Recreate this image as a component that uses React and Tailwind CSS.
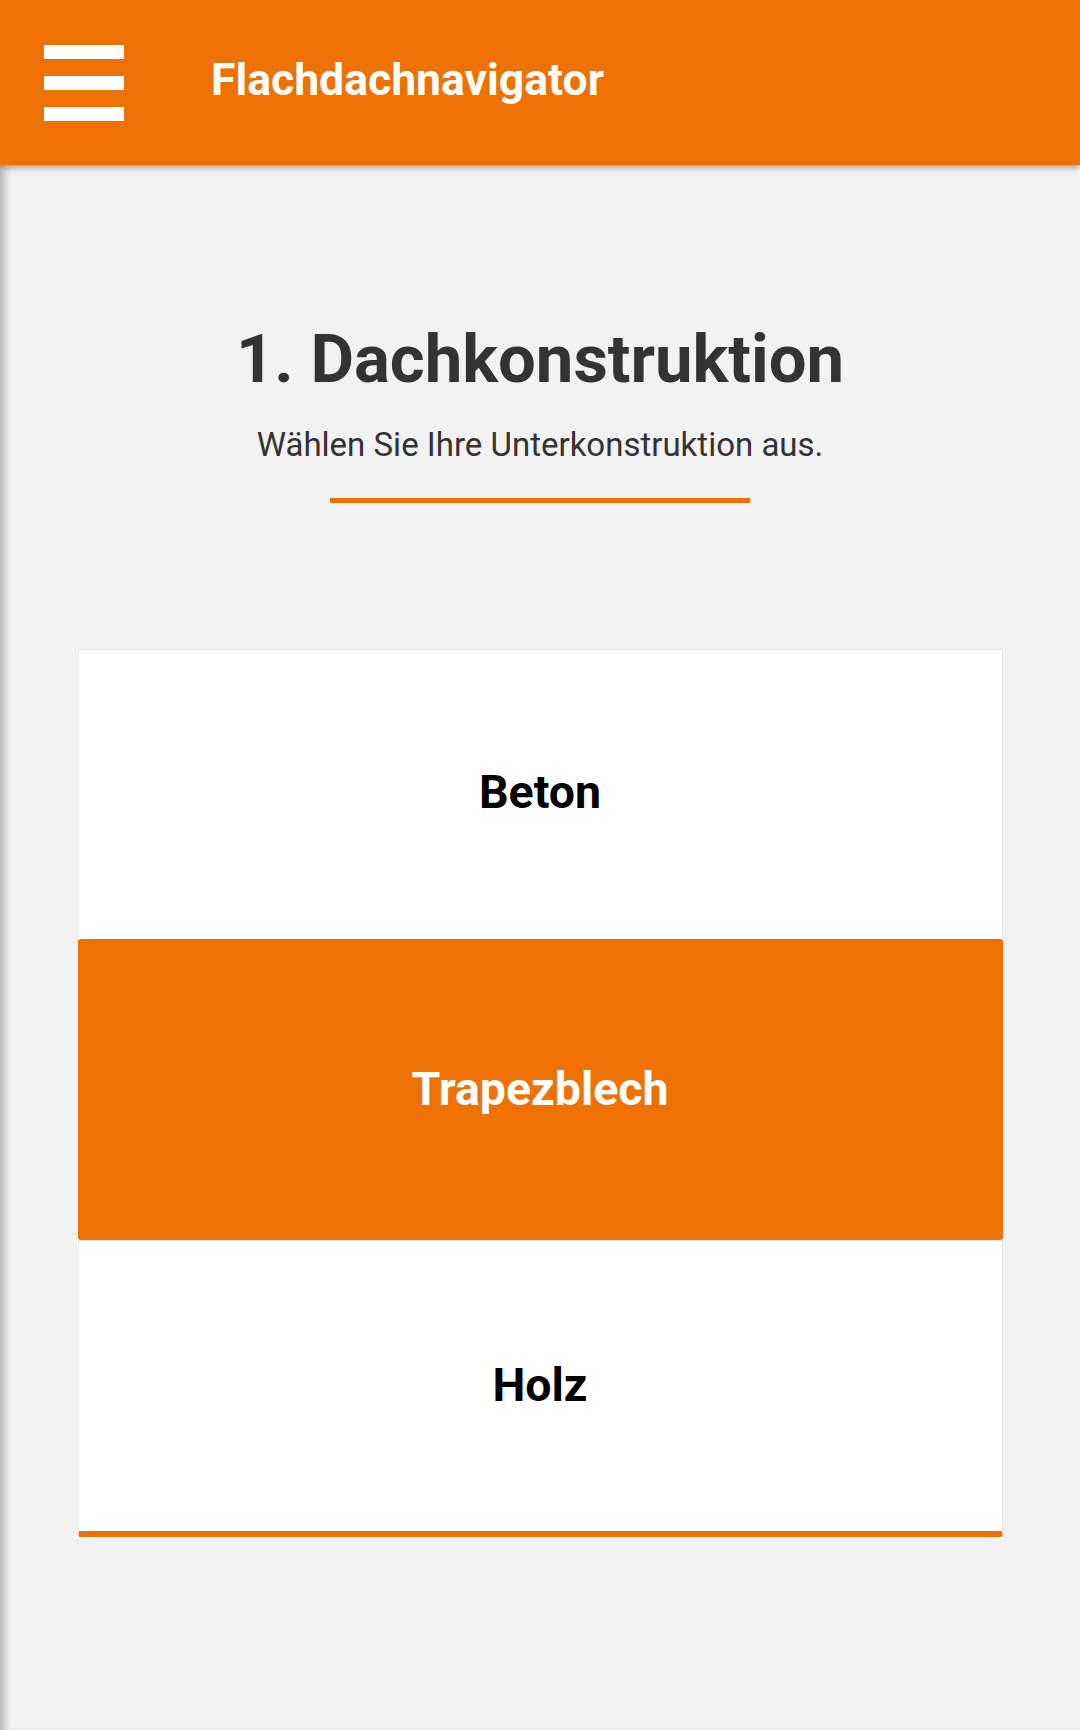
const options = [
  { id: 'beton', label: 'Beton', h: 'h-[290px]' },
  { id: 'trapez', label: 'Trapezblech', h: 'h-[301px]' },
  { id: 'holz', label: 'Holz', h: 'h-[297px]' },
];

export default function App() {
  const selected = 'trapez';

  return (
    <div className="flex h-[1730px] w-[1080px] flex-col overflow-hidden bg-[#f2f2f2] font-['Roboto','Liberation_Sans',sans-serif]">
      <header className="relative z-10 flex h-[165px] shrink-0 items-center bg-[#ee7203] shadow-[0_3px_6px_rgba(0,0,0,0.3)]">
        <button className="ml-[44px] flex w-[80px] flex-col gap-[17px]" aria-label="Menü">
          <span className="block h-[14px] w-full bg-white" />
          <span className="block h-[14px] w-full bg-white" />
          <span className="block h-[14px] w-full bg-white" />
        </button>
        <h1 className="ml-[87px] pb-[4px] text-[44.5px] font-bold leading-none text-white">Flachdachnavigator</h1>
      </header>

      <main className="flex flex-1 flex-col items-center shadow-[inset_9px_0_8px_-5px_rgba(0,0,0,0.28)]">
        <h2 className="pt-[153px] text-[67px] font-bold leading-[82px] text-[#333333]">1. Dachkonstruktion</h2>
        <p className="mt-[25px] text-[33px] leading-[40px] text-[#333333]">Wählen Sie Ihre Unterkonstruktion aus.</p>
        <div className="mt-[33px] h-[5px] w-[420px] bg-[#ee7203]" />

        <div className="mt-[146px] flex w-[925px] flex-col">
          {options.map((o, i) => {
            const active = o.id === selected;
            const last = i === options.length - 1;
            return (
              <button
                key={o.id}
                className={`flex w-full items-center justify-center text-[46.5px] font-bold ${o.h} ${
                  active
                    ? 'rounded-[3px] bg-[#ee7203] text-white'
                    : 'border-x border-t border-[#e6e6e6] bg-white text-black'
                } ${last ? 'rounded-b-[3px] border-b-[6px] border-b-[#ee7203]' : 'pt-[0px]'}`}
              >
                <span className={i === 0 ? '-mt-[4px]' : ''}>{o.label}</span>
              </button>
            );
          })}
        </div>
      </main>
    </div>
  );
}
